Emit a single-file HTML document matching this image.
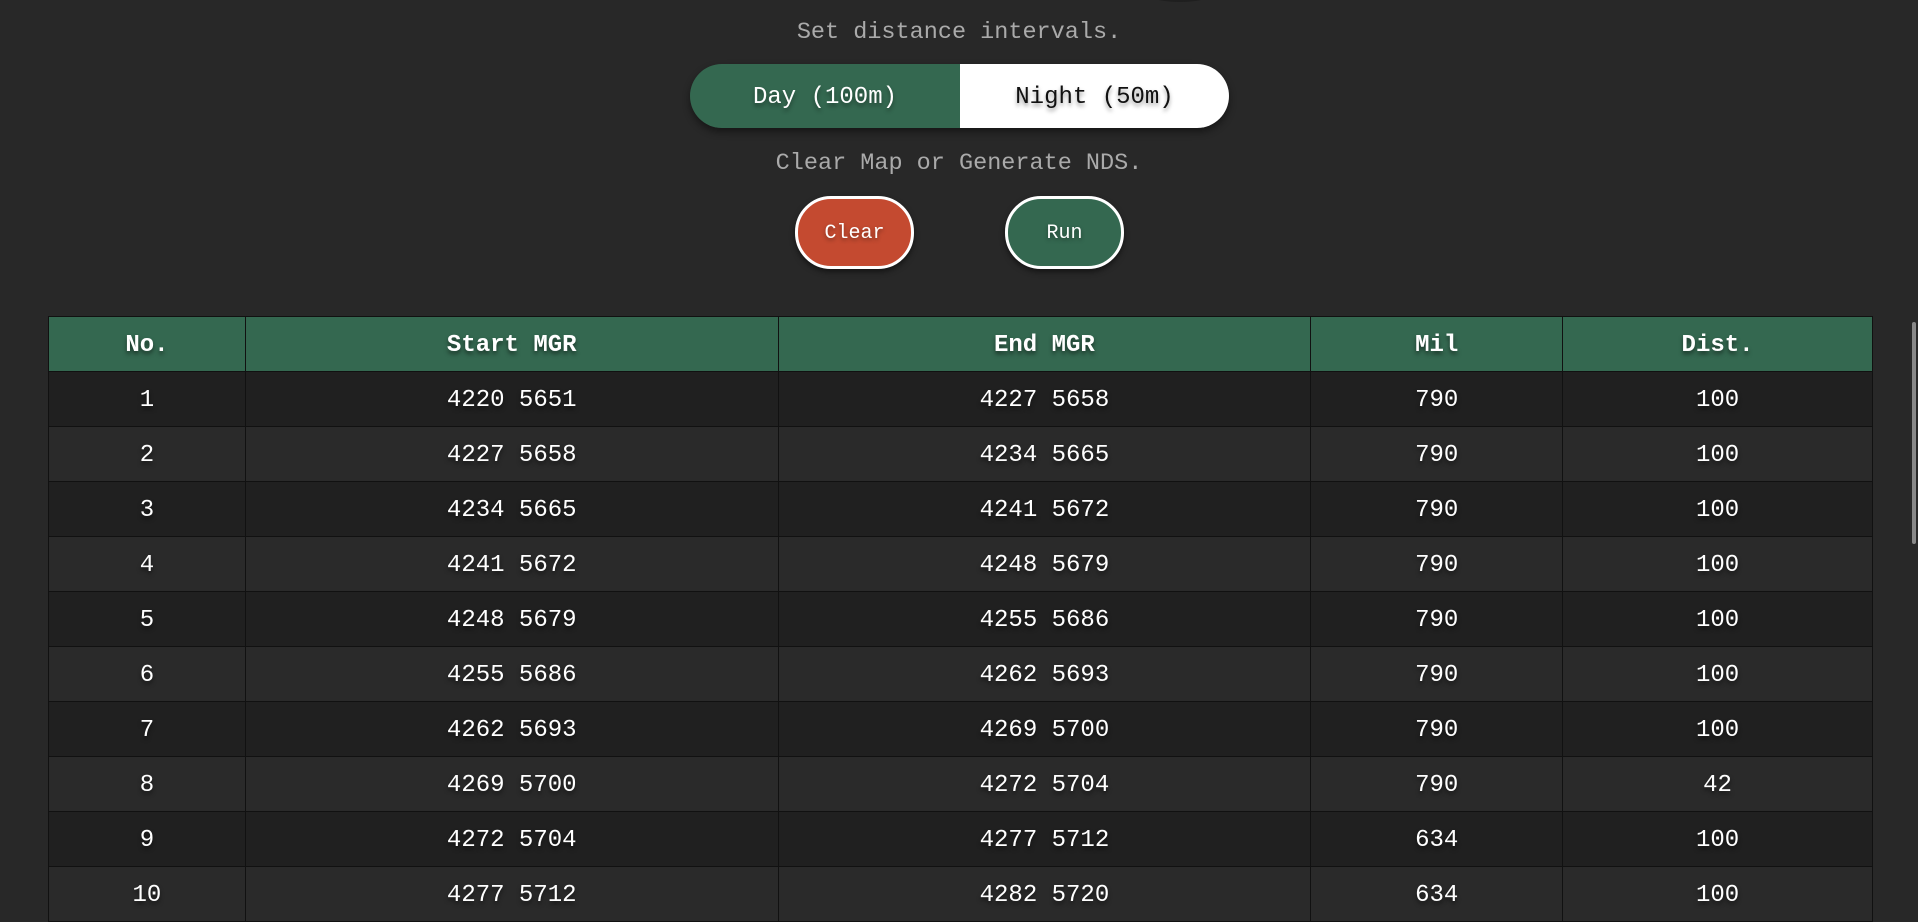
<!DOCTYPE html>
<html><head><meta charset="utf-8"><style>
html,body{margin:0;padding:0;width:1918px;height:868px;overflow:hidden;background:#282828;font-family:"Liberation Mono",monospace;}
.lbl{position:absolute;left:0;width:1918px;text-align:center;color:#aaa;font-size:23.5px;line-height:30px;}
.tog{position:absolute;left:690px;top:64px;width:539px;height:64px;box-shadow:0 4px 8px rgba(0,0,0,.45);border-radius:32px;overflow:hidden;display:flex;}
.tog div{display:flex;align-items:center;justify-content:center;font-size:24px;padding-top:3px;text-shadow:0 3px 4px rgba(0,0,0,.4);}
.d{width:270px;background:#346850;color:#fff;}
.n{flex:1;background:#fff;color:#111;}
.btn{position:absolute;top:196px;width:113px;height:65px;border:3px solid #fff;border-radius:36px;display:flex;align-items:center;justify-content:center;color:#fff;font-size:20px;padding-top:2px;box-sizing:content-box;box-shadow:0 3px 6px rgba(0,0,0,.5);text-shadow:0 2px 4px rgba(0,0,0,.4);}
table{position:absolute;left:48px;top:316px;width:1825px;border-collapse:collapse;}
td,th{border:1px solid #111;text-align:center;height:52px;padding:0;padding-top:2px;font-size:24px;color:#fff;text-shadow:0 3px 4px rgba(0,0,0,.5);}
th{background:#346850;font-weight:bold;}
tr:nth-child(even) td{background:#202020;}
tr:nth-child(odd) td{background:#2a2a2a;}
.sb{position:absolute;left:1912px;top:322px;width:4px;height:222px;background:#888;border-radius:2px;}
</style></head><body>
<div style="position:absolute;left:1148px;top:-14px;width:64px;height:16px;background:#1f1f1f;border-radius:50%;"></div>
<div class="lbl" style="top:18px">Set distance intervals.</div>
<div class="tog"><div class="d">Day (100m)</div><div class="n">Night (50m)</div></div>
<div class="lbl" style="top:149px">Clear Map or Generate NDS.</div>
<div class="btn" style="left:795px;background:#c44a30;">Clear</div>
<div class="btn" style="left:1005px;background:#346850;">Run</div>
<table>
<colgroup><col style="width:197px"><col style="width:533px"><col style="width:533px"><col style="width:252px"><col style="width:310px"></colgroup>
<tr><th>No.</th><th>Start MGR</th><th>End MGR</th><th>Mil</th><th>Dist.</th></tr>
<tr><td>1</td><td>4220 5651</td><td>4227 5658</td><td>790</td><td>100</td></tr>
<tr><td>2</td><td>4227 5658</td><td>4234 5665</td><td>790</td><td>100</td></tr>
<tr><td>3</td><td>4234 5665</td><td>4241 5672</td><td>790</td><td>100</td></tr>
<tr><td>4</td><td>4241 5672</td><td>4248 5679</td><td>790</td><td>100</td></tr>
<tr><td>5</td><td>4248 5679</td><td>4255 5686</td><td>790</td><td>100</td></tr>
<tr><td>6</td><td>4255 5686</td><td>4262 5693</td><td>790</td><td>100</td></tr>
<tr><td>7</td><td>4262 5693</td><td>4269 5700</td><td>790</td><td>100</td></tr>
<tr><td>8</td><td>4269 5700</td><td>4272 5704</td><td>790</td><td>42</td></tr>
<tr><td>9</td><td>4272 5704</td><td>4277 5712</td><td>634</td><td>100</td></tr>
<tr><td>10</td><td>4277 5712</td><td>4282 5720</td><td>634</td><td>100</td></tr>
</table>
<div class="sb"></div>
</body></html>
